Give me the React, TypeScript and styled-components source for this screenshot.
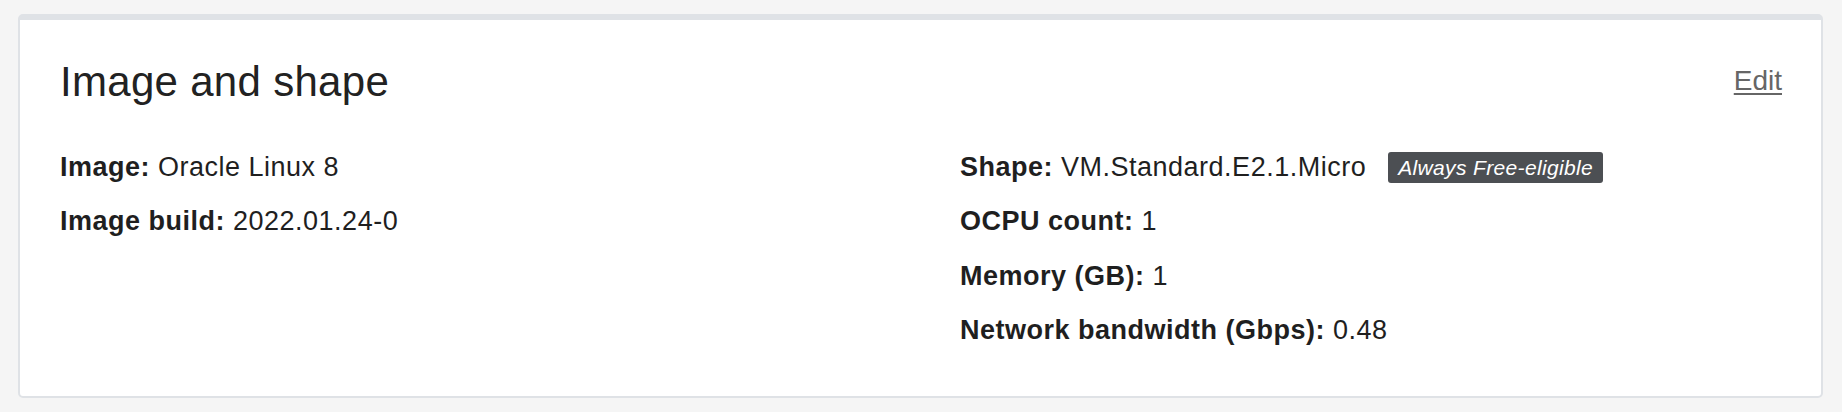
import React from "react";
import styled, { createGlobalStyle } from "styled-components";

const GlobalStyle = createGlobalStyle`
  html, body {
    margin: 0;
    padding: 0;
    background: #f5f5f5;
  }
  body {
    font-family: "Liberation Sans", Arial, Helvetica, sans-serif;
    color: #1f1f1f;
  }
`;

const Page = styled.div`
  padding: 14px 19px 14px 18px;
  box-sizing: border-box;
  width: 1842px;
`;

const Card = styled.section`
  background: #ffffff;
  border: 2px solid #dfe2e6;
  border-top-width: 6px;
  border-radius: 5px;
  padding: 37px 39px 50px 40px;
`;

const Header = styled.div`
  display: flex;
  justify-content: space-between;
  align-items: flex-start;
`;

const Title = styled.h2`
  margin: 0;
  font-size: 42px;
  line-height: 50.4px;
  font-weight: 400;
  letter-spacing: 0.3px;
  color: #222222;
`;

const EditLink = styled.a`
  margin-top: 8px;
  font-size: 28px;
  line-height: 32px;
  color: #666666;
  text-decoration: underline;
  text-underline-offset: 3px;
  text-decoration-thickness: 1.5px;
  cursor: pointer;
`;

const Columns = styled.div`
  display: grid;
  grid-template-columns: 900px 1fr;
  margin-top: 44.5px;
`;

const Column = styled.div`
  display: flex;
  flex-direction: column;
  gap: 23.5px;
`;

const Row = styled.div`
  display: flex;
  align-items: center;
  min-height: 31px;
  font-size: 27px;
  line-height: 31px;
  letter-spacing: 0.5px;
  white-space: nowrap;
`;

const Label = styled.b`
  font-weight: 700;
  margin-right: 8px;
`;

const Value = styled.span`
  font-weight: 400;
`;

const Badge = styled.span`
  display: inline-flex;
  align-items: center;
  height: 31px;
  margin-left: 22px;
  padding: 0 10px;
  background: #4c4f53;
  color: #ffffff;
  border-radius: 3px;
  font-size: 21px;
  font-style: italic;
  letter-spacing: 0.35px;
`;

type Item = { label: string; value: string; badge?: string };

const leftItems: Item[] = [
  { label: "Image:", value: "Oracle Linux 8" },
  { label: "Image build:", value: "2022.01.24-0" },
];

const rightItems: Item[] = [
  { label: "Shape:", value: "VM.Standard.E2.1.Micro", badge: "Always Free-eligible" },
  { label: "OCPU count:", value: "1" },
  { label: "Memory (GB):", value: "1" },
  { label: "Network bandwidth (Gbps):", value: "0.48" },
];

const DetailColumn = ({ items }: { items: Item[] }) => (
  <Column>
    {items.map((it) => (
      <Row key={it.label}>
        <Label>{it.label}</Label>
        <Value>{it.value}</Value>
        {it.badge && <Badge>{it.badge}</Badge>}
      </Row>
    ))}
  </Column>
);

export default function App() {
  return (
    <>
      <GlobalStyle />
      <Page>
        <Card>
          <Header>
            <Title>Image and shape</Title>
            <EditLink>Edit</EditLink>
          </Header>
          <Columns>
            <DetailColumn items={leftItems} />
            <DetailColumn items={rightItems} />
          </Columns>
        </Card>
      </Page>
    </>
  );
}
